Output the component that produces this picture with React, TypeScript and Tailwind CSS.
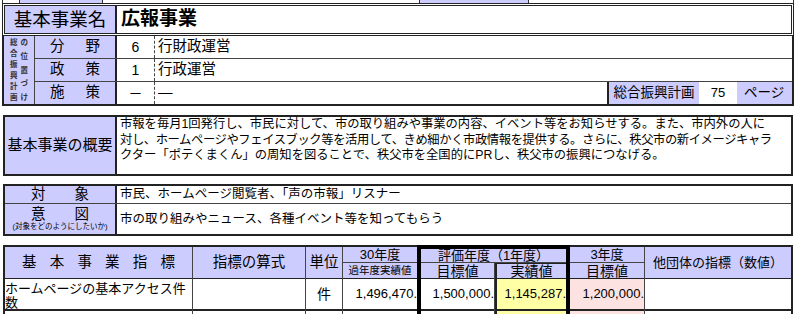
import React from "react";

const chars = (s: string) => s.split("").map((c, i) => <span key={i}>{c}</span>);

function Spread({ text, className }: { text: string; className: string }) {
  return <div className={`flex justify-between shrink-0 ${className}`}>{chars(text)}</div>;
}

function PositionRow({
  label,
  num,
  text,
  last,
  children,
}: {
  label: string;
  num: string;
  text: string;
  last?: boolean;
  children?: React.ReactNode;
}) {
  return (
    <div className={`flex ${last ? "h-[22px]" : "h-[23px] border-b border-[#444]"}`}>
      <Spread
        text={label}
        className="w-[82px] bg-[#ccccff] border-r-2 border-[#222] items-center px-[15px] text-[14.5px]"
      />
      <div className="w-[38px] shrink-0 flex items-center justify-center text-[14px] border-r border-dashed border-[#444]">
        {num}
      </div>
      <div className="flex-1 flex items-center pl-[3px] text-[14.5px]">{text}</div>
      {children}
    </div>
  );
}

export default function App() {
  return (
    <div className="w-[800px] h-[314px] overflow-hidden bg-white text-black font-['Liberation_Sans','Noto_Sans_CJK_JP',sans-serif]">
      {/* tail of the row above */}
      <div className="ml-[2px] w-[792px] h-[3px] flex border-x border-[#333]">
        <div className="w-[16px]" />
        <div className="w-[84px] bg-[#ccccff] border-x border-[#333]" />
        <div className="w-[316px]" />
        <div className="w-[110px] bg-[#ccccff] border-x border-[#333]" />
      </div>

      {/* 基本事業名 */}
      <div className="ml-[2px] w-[792px] h-[33px] flex border-[3px] border-double border-[#222]">
        <div className="w-[112px] shrink-0 bg-[#ccccff] border-r-2 border-[#222] flex items-center justify-center text-[18.5px] whitespace-nowrap">
          基本事業名
        </div>
        <div className="flex-1 flex items-center pl-[4px] text-[19px] font-bold">広報事業</div>
      </div>

      {/* 総合振興計画の位置づけ */}
      <div className="ml-[2px] w-[792px] h-[70px] flex border-x-2 border-b-2 border-[#222]">
        <div className="w-[31px] shrink-0 bg-[#ccccff] border-r border-[#444] flex justify-center gap-[3px] py-[2px] text-[7.5px] leading-[9px] font-bold text-[#333]">
          <div className="flex flex-col justify-between">{chars("総合振興計画")}</div>
          <div className="flex flex-col justify-between">{chars("の位置づけ")}</div>
        </div>
        <div className="flex-1 flex flex-col">
          <PositionRow label="分野" num="6" text="行財政運営" />
          <PositionRow label="政策" num="1" text="行政運営" />
          <PositionRow label="施策" num="－" text="—" last>
            <div className="flex border-l-2 border-[#222]">
              <div className="w-[90px] bg-[#ccccff] flex items-center justify-center text-[13.5px]">総合振興計画</div>
              <div className="w-[38px] flex items-center justify-center text-[13px]">75</div>
              <div className="w-[55px] bg-[#ccccff] flex items-center pl-[7px] text-[13.5px]">ページ</div>
            </div>
          </PositionRow>
        </div>
      </div>

      {/* 基本事業の概要 */}
      <div className="mt-[9px] ml-[3px] w-[790px] h-[61px] flex border-2 border-[#222]">
        <div className="w-[112px] shrink-0 bg-[#ccccff] border-r-2 border-[#222] flex items-center justify-center text-[15px] whitespace-nowrap">
          基本事業の概要
        </div>
        <div className="flex-1 min-w-0 pl-[3px] text-[12.3px] leading-[15.5px] whitespace-nowrap">
          <div>市報を毎月1回発行し、市民に対して、市の取り組みや事業の内容、イベント等をお知らせする。また、市内外の人に</div>
          <div className="tracking-[-0.4px]">
            対し、ホームページやフェイスブック等を活用して、きめ細かく市政情報を提供する。さらに、秩父市の新イメージキャラ
          </div>
          <div>クター「ポテくまくん」の周知を図ることで、秩父市を全国的にPRし、秩父市の振興につなげる。</div>
        </div>
      </div>

      {/* 対象・意図 */}
      <div className="mt-[8px] ml-[3px] w-[790px] h-[52px] flex flex-col border-2 border-[#222]">
        <div className="h-[18px] flex border-b border-[#444]">
          <Spread
            text="対象"
            className="w-[112px] bg-[#ccccff] border-r-2 border-[#222] items-center px-[26px] text-[14.5px]"
          />
          <div className="flex-1 flex items-center pl-[3px] text-[12.5px]">市民、ホームページ閲覧者、「声の市報」リスナー</div>
        </div>
        <div className="flex-1 flex">
          <div className="w-[112px] shrink-0 bg-[#ccccff] border-r-2 border-[#222] flex flex-col items-center justify-center">
            <Spread text="意図" className="w-full px-[26px] text-[14.5px] leading-[16px]" />
            <div className="text-[7.5px] leading-[10px] whitespace-nowrap">(対象をどのようにしたいか)</div>
          </div>
          <div className="flex-1 flex items-center pl-[3px] text-[12.5px]">市の取り組みやニュース、各種イベント等を知ってもらう</div>
        </div>
      </div>

      {/* 基本事業指標 */}
      <div className="mt-[9px] ml-[3px] w-[790px] flex border-t-2 border-x-2 border-[#222] text-[13px]">
        <div className="w-[188px] flex flex-col border-r border-[#444]">
          <Spread
            text="基本事業指標"
            className="h-[32px] bg-[#ccccff] border-b border-[#222] items-center px-[17px] text-[14.5px]"
          />
          <div className="h-[32px] border-b-2 border-[#222] text-[13px] leading-[14px] pt-[3px]">
            ホームページの基本アクセス件数
          </div>
          <div className="h-[10px]" />
        </div>
        <div className="w-[113px] flex flex-col border-r border-[#444]">
          <div className="h-[32px] bg-[#ccccff] border-b border-[#222] flex items-center justify-center text-[14.5px]">
            指標の算式
          </div>
          <div className="h-[32px] border-b-2 border-[#222]" />
        </div>
        <div className="w-[37px] flex flex-col border-r border-[#444]">
          <div className="h-[32px] bg-[#ccccff] border-b border-[#222] flex items-center justify-center text-[14.5px]">
            単位
          </div>
          <div className="h-[32px] border-b-2 border-[#222] flex items-center justify-center text-[14px]">件</div>
        </div>
        <div className="w-[74px] flex flex-col">
          <div className="h-[16px] bg-[#ccccff] border-b border-[#444] flex items-center justify-center leading-none">30年度</div>
          <div className="h-[16px] bg-[#ccccff] border-b border-[#222] flex items-center justify-center text-[10.5px] leading-none">
            過年度実績値
          </div>
          <div className="h-[32px] border-b-2 border-[#222] flex items-center justify-end overflow-hidden">1,496,470.</div>
        </div>
        <div className="w-[153px] -mt-[2px] flex flex-col border-x-4 border-t-4 border-black">
          <div className="h-[14px] bg-[#ccccff] border-b border-[#444] flex items-center justify-center leading-none">
            評価年度（1年度）
          </div>
          <div className="flex">
            <div className="w-[74px] flex flex-col border-r border-[#444]">
              <div className="h-[16px] bg-[#ccccff] border-b border-[#222] flex items-center justify-center text-[14px] leading-none">
                目標値
              </div>
              <div className="h-[32px] border-b-2 border-[#222] flex items-center justify-end overflow-hidden">1,500,000.</div>
            </div>
            <div className="flex-1 flex flex-col border-l-2 border-[#222]">
              <div className="h-[16px] bg-[#ccccff] border-y border-[#222] flex items-center justify-center text-[14px] leading-none">
                実績値
              </div>
              <div className="h-[32px] bg-[#ffffa6] border-b-2 border-[#222] flex items-center justify-end overflow-hidden">
                1,145,287.
              </div>
              <div className="h-[10px] bg-[#ffffa6]" />
            </div>
          </div>
        </div>
        <div className="w-[75px] flex flex-col border-r border-[#444]">
          <div className="h-[16px] bg-[#ccccff] border-b border-[#444] flex items-center justify-center leading-none">3年度</div>
          <div className="h-[16px] bg-[#ccccff] border-b border-[#222] flex items-center justify-center text-[14px] leading-none">
            目標値
          </div>
          <div className="h-[32px] bg-[#fde2e2] border-b-2 border-[#222] flex items-center justify-end overflow-hidden">
            1,200,000.
          </div>
          <div className="h-[10px] bg-[#fde2e2]" />
        </div>
        <div className="flex-1 flex flex-col">
          <div className="h-[32px] bg-[#ccccff] border-b border-[#222] flex items-center justify-center text-[13px]">
            他団体の指標（数値）
          </div>
          <div className="h-[32px] border-b-2 border-[#222]" />
        </div>
      </div>
    </div>
  );
}
